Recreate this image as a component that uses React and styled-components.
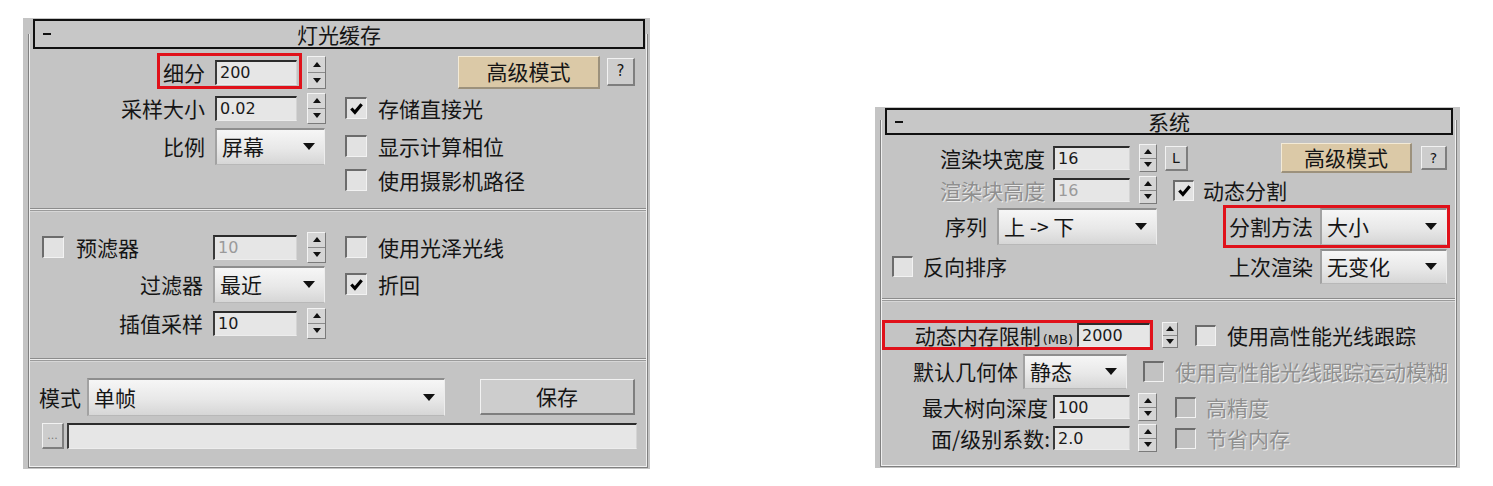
import React from "react";
import styled, { createGlobalStyle } from "styled-components";

const GlobalStyle = createGlobalStyle`
  html, body {
    margin: 0;
    padding: 0;
    background: #fff;
  }
  body {
    font-family: "Noto Sans CJK SC", "Noto Sans", sans-serif;
    color: #151515;
  }
`;

const Canvas = styled.div`
  display: flex;
  align-items: flex-start;
  gap: 225px;
  width: 1493px;
  height: 486px;
  padding: 18px 0 0 23px;
  box-sizing: border-box;
  overflow: hidden;
`;

const Rollout = styled.div`
  width: ${({ $width }) => $width}px;
  margin-top: ${({ $top }) => $top || 0}px;
  padding: 1px ${({ $right }) => $right}px 1px 5px;
  background: #c4c4c4;
  box-sizing: border-box;
`;

const TitleBar = styled.div`
  position: relative;
  z-index: 1;
  display: flex;
  align-items: center;
  height: ${({ $h }) => $h}px;
  margin: 0 ${({ $right }) => $right}px 0 5px;
  border: 2px solid #101010;
  background: #c7c7c7;
  box-sizing: border-box;
  font-size: 21px;
`;

// the collapse dash at the left of a rollout title
const Minus = styled.span`
  flex: none;
  width: 8px;
  height: 2px;
  margin-left: 8px;
  margin-right: -16px;
  background: #111;
`;

const Title = styled.span`
  flex: 1;
  text-align: center;
  line-height: 1;
`;

const Frame = styled.div`
  margin-top: -15px;
  padding-top: 15px;
  border: 1px solid #808080;
  border-top: none;
  box-shadow: inset 1px 0 0 #efefef, inset -1px 0 0 #efefef, inset 0 -1px 0 #efefef;
`;

const Section = styled.div`
  display: flex;
  flex-direction: column;
  padding: ${({ $pad }) => $pad};
  gap: ${({ $gap }) => $gap || 0}px;
`;

const Separator = styled.div`
  height: 4px;
  margin: 0 1px;
  background: linear-gradient(#8c8c8c 0 1px, #ededed 1px 2px, #9a9a9a 2px 3px, #d6d6d6 3px);
`;

const Row = styled.div`
  display: flex;
  align-items: center;
  height: ${({ $h }) => $h}px;
`;

const Lead = styled.div`
  flex: none;
  width: ${({ $w }) => $w}px;
  display: flex;
  align-items: center;
  justify-content: ${({ $spread }) => ($spread ? "space-between" : "flex-end")};
  gap: ${({ $gap }) => $gap}px;
  padding-left: ${({ $pl }) => $pl || 0}px;
  box-sizing: border-box;
`;

const Aside = styled.div`
  flex: 1;
  display: flex;
  align-items: center;
  justify-content: ${({ $end }) => ($end ? "flex-end" : "flex-start")};
  gap: ${({ $gap }) => $gap || 0}px;
  margin-left: ${({ $ml }) => $ml || 0}px;
`;

const Label = styled.span`
  font-size: ${({ $size }) => $size || 21}px;
  line-height: 1;
  white-space: nowrap;
  color: ${({ $off }) => ($off ? "#8f8f8f" : "#151515")};
  text-shadow: ${({ $off }) => ($off ? "1px 1px 0 #ececec" : "none")};
`;

const Small = styled.span`
  font-family: "DejaVu Sans", sans-serif;
  font-size: 13px;
  margin-left: 2px;
`;

const Highlight = styled.div`
  display: flex;
  align-items: center;
  justify-content: flex-end;
  flex: ${({ $fill }) => ($fill ? 1 : "none")};
  gap: ${({ $gap }) => $gap}px;
  padding: ${({ $t, $r, $b, $l }) => `${$t}px ${$r}px ${$b}px ${$l}px`};
  margin: ${({ $t, $r, $b, $l }) => `-${$t}px -${$r}px -${$b}px -${$l}px`};
  box-shadow: 0 0 0 3px #e0111a;
`;

const Field = styled.div`
  flex: none;
  display: flex;
  align-items: center;
  width: ${({ $w }) => $w}px;
  height: ${({ $h }) => $h || 25}px;
  padding-left: 3px;
  box-sizing: border-box;
  background: #e6e6e6;
  border-top: 2px solid #2c2c2c;
  border-left: 2px solid #3a3a3a;
  border-right: 1px solid #d4d4d4;
  border-bottom: 1px solid #ededed;
  font-family: "DejaVu Sans", sans-serif;
  font-size: ${({ $fs }) => $fs || 16}px;
  color: ${({ $off }) => ($off ? "#9a9a9a" : "#1a1a1a")};
`;

const Spinner = styled.div`
  flex: none;
  display: flex;
  flex-direction: column;
  width: ${({ $w }) => $w || 19}px;
  height: ${({ $h }) => $h || 31}px;
  margin-left: ${({ $ml }) => $ml || 0}px;
  box-sizing: border-box;
  background: #d5d5d5;
  border-top: 1px solid #f3f3f3;
  border-left: 1px solid #f3f3f3;
  border-right: 1px solid #7a7a7a;
  border-bottom: 1px solid #7a7a7a;
`;

const SpinHalf = styled.div`
  flex: 1;
  display: flex;
  align-items: center;
  justify-content: center;
  & + & {
    border-top: 1px solid #8a8a8a;
  }
`;

const Tri = styled.span`
  width: 0;
  height: 0;
  border-left: 4px solid transparent;
  border-right: 4px solid transparent;
  ${({ $up }) => ($up ? "border-bottom: 5px solid #111;" : "border-top: 5px solid #111;")}
`;

const Spin = (props) => (
  <Spinner {...props}>
    <SpinHalf>
      <Tri $up />
    </SpinHalf>
    <SpinHalf>
      <Tri />
    </SpinHalf>
  </Spinner>
);

const Dropdown = styled.div`
  flex: none;
  display: flex;
  align-items: center;
  justify-content: space-between;
  width: ${({ $w }) => $w}px;
  height: ${({ $h }) => $h || 36}px;
  padding: 0 9px 0 5px;
  box-sizing: border-box;
  background: linear-gradient(#f6f6f6, #e8e8e8 55%, #d6d6d6);
  border-top: 2px solid #8e8e8e;
  border-left: 2px solid #a2a2a2;
  border-right: 1px solid #ededed;
  border-bottom: 1px solid #b8b8b8;
  font-size: 21px;
  line-height: 1;
  white-space: nowrap;
`;

const DownArrow = styled.span`
  width: 0;
  height: 0;
  border-left: 6px solid transparent;
  border-right: 6px solid transparent;
  border-top: 7px solid #111;
`;

const Select = ({ w, h, children }) => (
  <Dropdown $w={w} $h={h}>
    <span>{children}</span>
    <DownArrow />
  </Dropdown>
);

const Box = styled.div`
  flex: none;
  display: flex;
  align-items: center;
  justify-content: center;
  width: ${({ $s }) => $s || 22}px;
  height: ${({ $s }) => $s || 22}px;
  box-sizing: border-box;
  background: ${({ $off }) => ($off ? "#c2c2c2" : "#e2e2e2")};
  border-top: 2px solid #6c6c6c;
  border-left: 2px solid #6c6c6c;
  border-right: 1px solid #f2f2f2;
  border-bottom: 1px solid #f2f2f2;
`;

const CheckItem = styled.div`
  display: flex;
  align-items: center;
  gap: ${({ $gap }) => $gap || 11}px;
`;

const Check = ({ on, off, label, gap, s }) => (
  <CheckItem $gap={gap}>
    <Box $off={off} $s={s}>
      {on && (
        <svg width="15" height="15" viewBox="0 0 16 16">
          <path d="M2.5 8 L6.3 12 L13.5 3.5" fill="none" stroke="#000" strokeWidth="3.4" />
        </svg>
      )}
    </Box>
    {label && <Label $off={off}>{label}</Label>}
  </CheckItem>
);

const Button = styled.div`
  flex: none;
  display: flex;
  align-items: center;
  justify-content: center;
  width: ${({ $w }) => $w}px;
  height: ${({ $h }) => $h}px;
  box-sizing: border-box;
  background: ${({ $tan }) => ($tan ? "#dbc9a7" : "#cdcdcd")};
  border-top: 1px solid ${({ $tan }) => ($tan ? "#f3ead6" : "#f2f2f2")};
  border-left: 1px solid ${({ $tan }) => ($tan ? "#f3ead6" : "#f2f2f2")};
  border-right: 2px solid ${({ $tan }) => ($tan ? "#9c917c" : "#7e7e7e")};
  border-bottom: 2px solid ${({ $tan }) => ($tan ? "#9c917c" : "#7e7e7e")};
  font-family: ${({ $latin }) => ($latin ? "'DejaVu Sans', sans-serif" : "inherit")};
  font-size: ${({ $fs }) => $fs || 21}px;
  line-height: 1;
  color: ${({ $muted }) => ($muted ? "#7a7a7a" : "#151515")};
`;

const LightCache = () => (
  <Rollout $width={627} $right={2}>
    <TitleBar $h={30} $right={3}>
      <Minus />
      <Title>灯光缓存</Title>
    </TitleBar>
    <Frame>
      <Section $pad="5px 12px 14px 4px">
        <Row $h={36}>
          <Lead $w={264} $gap={10}>
            <Highlight $gap={10} $t={4} $r={2} $b={1} $l={3}>
              <Label>细分</Label>
              <Field $w={82}>200</Field>
            </Highlight>
          </Lead>
          <Spin $ml={10} $h={33} />
          <Aside $end $gap={7}>
            <Button $tan $w={142} $h={33}>高级模式</Button>
            <Button $w={28} $h={28} $latin $fs={15}>?</Button>
          </Aside>
        </Row>
        <Row $h={36}>
          <Lead $w={264} $gap={10}>
            <Label>采样大小</Label>
            <Field $w={82}>0.02</Field>
          </Lead>
          <Spin $ml={10} />
          <Aside $ml={19}>
            <Check on label="存储直接光" />
          </Aside>
        </Row>
        <Row $h={40}>
          <Lead $w={292} $gap={10}>
            <Label>比例</Label>
            <Select w={110} h={37}>屏幕</Select>
          </Lead>
          <Aside $ml={20}>
            <Check label="显示计算相位" />
          </Aside>
        </Row>
        <Row $h={28}>
          <Lead $w={292} $gap={10} />
          <Aside $ml={20}>
            <Check label="使用摄影机路径" />
          </Aside>
        </Row>
      </Section>
      <Separator />
      <Section $pad="20px 12px 18px 4px">
        <Row $h={30}>
          <Lead $w={264} $gap={10} $spread $pl={9}>
            <Check label="预滤器" gap={12} />
            <Field $w={84} $off>10</Field>
          </Lead>
          <Spin $ml={10} />
          <Aside $ml={19}>
            <Check label="使用光泽光线" />
          </Aside>
        </Row>
        <Row $h={44}>
          <Lead $w={292} $gap={10}>
            <Label>过滤器</Label>
            <Select w={112} h={37}>最近</Select>
          </Lead>
          <Aside $ml={20}>
            <Check on label="折回" />
          </Aside>
        </Row>
        <Row $h={34}>
          <Lead $w={264} $gap={10}>
            <Label>插值采样</Label>
            <Field $w={84}>10</Field>
          </Lead>
          <Spin $ml={10} />
        </Row>
      </Section>
      <Separator />
      <Section $pad="16px 12px 17px 4px" $gap={6}>
        <Row $h={38}>
          <Lead $w={412} $gap={6}>
            <Label>模式</Label>
            <Select w={358} h={38}>单帧</Select>
          </Lead>
          <Aside $end>
            <Button $w={155} $h={36}>保存</Button>
          </Aside>
        </Row>
        <Row $h={28}>
          <Lead $w={9} $gap={0} />
          <Button $w={22} $h={26} $latin $fs={11} $muted>...</Button>
          <Aside $ml={3}>
            <Field $w={570} $h={26} />
          </Aside>
        </Row>
      </Section>
    </Frame>
  </Rollout>
);

const SystemPanel = () => (
  <Rollout $width={585} $top={89} $right={3}>
    <TitleBar $h={27} $right={4}>
      <Minus />
      <Title>系统</Title>
    </TitleBar>
    <Frame>
      <Section $pad="5px 9px 14px 4px">
        <Row $h={36}>
          <Lead $w={245} $gap={8}>
            <Label>渲染块宽度</Label>
            <Field $w={77} $h={24}>16</Field>
          </Lead>
          <Spin $ml={9} $w={18} $h={28} />
          <Aside $ml={8}>
            <Button $w={23} $h={25} $latin $fs={14}>L</Button>
            <Button $tan $w={131} $h={30} style={{ marginLeft: "auto" }}>高级模式</Button>
            <Button $w={26} $h={24} $latin $fs={14} style={{ marginLeft: 9 }}>?</Button>
          </Aside>
        </Row>
        <Row $h={28}>
          <Lead $w={245} $gap={8}>
            <Label $off>渲染块高度</Label>
            <Field $w={77} $h={24} $off>16</Field>
          </Lead>
          <Spin $ml={9} $w={18} $h={28} />
          <Aside $ml={16}>
            <Check on label="动态分割" gap={9} s={21} />
          </Aside>
        </Row>
        <Row $h={44}>
          <Lead $w={272} $gap={10}>
            <Label>序列</Label>
            <Select w={160} h={37}>上 -&gt; 下</Select>
          </Lead>
          <Aside $end>
            <Highlight $gap={7} $t={0} $r={0} $b={0} $l={3}>
              <Label>分割方法</Label>
              <Select w={127} h={37}>大小</Select>
            </Highlight>
          </Aside>
        </Row>
        <Row $h={36}>
          <Lead $w={272} $gap={10} $spread $pl={7}>
            <Check label="反向排序" gap={10} s={21} />
          </Lead>
          <Aside $end $gap={7}>
            <Label>上次渲染</Label>
            <Select w={127} h={35}>无变化</Select>
          </Aside>
        </Row>
      </Section>
      <Separator />
      <Section $pad="16px 9px 14px 4px">
        <Row $h={34}>
          <Lead $w={265} $gap={4}>
            <Highlight $fill $gap={4} $t={0} $r={0} $b={0} $l={0}>
              <Label>
                动态内存限制<Small>(MB)</Small>
              </Label>
              <Field $w={73} $h={24}>2000</Field>
            </Highlight>
          </Lead>
          <Spin $ml={12} $w={16} $h={26} />
          <Aside $ml={17}>
            <Check label="使用高性能光线跟踪" gap={11} s={21} />
          </Aside>
        </Row>
        <Row $h={38}>
          <Lead $w={242} $gap={5}>
            <Label>默认几何体</Label>
            <Select w={104} h={35}>静态</Select>
          </Lead>
          <Aside $ml={16}>
            <Check off label="使用高性能光线跟踪运动模糊" gap={11} s={21} />
          </Aside>
        </Row>
        <Row $h={34}>
          <Lead $w={245} $gap={5}>
            <Label>最大树向深度</Label>
            <Field $w={77} $h={24}>100</Field>
          </Lead>
          <Spin $ml={8} $w={19} $h={28} />
          <Aside $ml={18}>
            <Check off label="高精度" gap={10} s={21} />
          </Aside>
        </Row>
        <Row $h={28}>
          <Lead $w={245} $gap={3}>
            <Label>面/级别系数:</Label>
            <Field $w={77} $h={24}>2.0</Field>
          </Lead>
          <Spin $ml={8} $w={19} $h={28} />
          <Aside $ml={18}>
            <Check off label="节省内存" gap={10} s={21} />
          </Aside>
        </Row>
      </Section>
    </Frame>
  </Rollout>
);

export default function App() {
  return (
    <>
      <GlobalStyle />
      <Canvas>
        <LightCache />
        <SystemPanel />
      </Canvas>
    </>
  );
}
